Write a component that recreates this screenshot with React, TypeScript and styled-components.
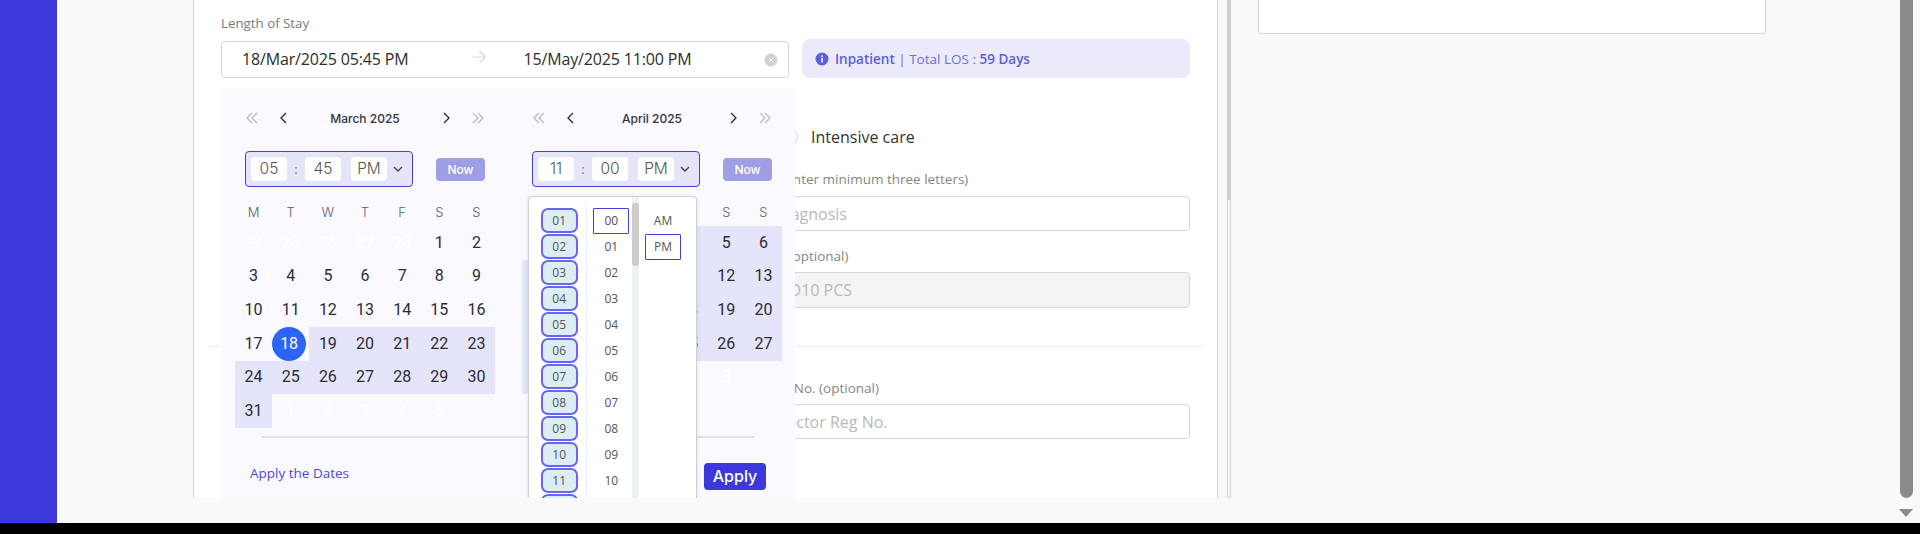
import { FC } from "react";
import styled, { createGlobalStyle } from "styled-components";

const GlobalStyle = createGlobalStyle`
  html, body {
    margin: 0;
    padding: 0;
    height: 534px;
    overflow: hidden;
    background: #000;
    font-family: "Open Sans", "Liberation Sans", sans-serif;
  }
  * { box-sizing: border-box; }
`;

interface DayCell {
  label: string;
  inRange?: boolean;
  muted?: boolean;
  selected?: boolean;
}

const buildDays = (
  before: number[],
  total: number,
  after: number[],
  isInRange: (day: number) => boolean,
  selected?: number,
): DayCell[] => [
  ...before.map((d) => ({ label: String(d), muted: true })),
  ...Array.from({ length: total }, (_, i) => ({
    label: String(i + 1),
    inRange: isInRange(i + 1),
    selected: selected === i + 1,
  })),
  ...after.map((d) => ({ label: String(d), muted: true })),
];

const marchDays = buildDays([24, 25, 26, 27, 28], 31, [1, 2, 3, 4, 5], (d) => d > 18, 18);
const aprilDays = buildDays([31], 30, [1, 2, 3], () => true);
const weekDays = ["M", "T", "W", "T", "F", "S", "S"];
const hours = ["01", "02", "03", "04", "05", "06", "07", "08", "09", "10", "11", "12"];
const minutes = ["00", "01", "02", "03", "04", "05", "06", "07", "08", "09", "10", "11"];

const InfoIcon = () => (
  <svg width='14' height='14' viewBox='0 0 14 14'>
    <circle cx='7' cy='7' r='6.5' fill='#5d5fdb' />
    <rect x='6.2' y='6' width='1.7' height='4.6' fill='#eaeafb' />
    <rect x='6.2' y='3.4' width='1.7' height='1.7' fill='#eaeafb' />
  </svg>
);

const ClearIcon = () => (
  <svg width='14' height='14' viewBox='0 0 14 14'>
    <circle cx='7' cy='7' r='6.5' fill='#d0d2da' />
    <path d='M5 5l4 4M9 5l-4 4' stroke='#fff' strokeWidth='1' />
  </svg>
);

const ArrowIcon = () => (
  <svg width='16' height='16' viewBox='0 0 16 16' fill='none' stroke='#d4d6dc' strokeWidth='1.2'>
    <path d='M1 8h13M8.5 2l5.8 6-5.8 6' />
  </svg>
);

const Chevron: FC<{ dir: "left" | "right"; double?: boolean }> = ({ dir, double }) => {
  if (double) {
    const paths =
      dir === "left" ? ["M7 2L2 7l5 5", "M12 2L7 7l5 5"] : ["M2 2l5 5-5 5", "M7 2l5 5-5 5"];
    return (
      <NavIcon viewBox='0 0 14 14' stroke='#b9bbc6'>
        <path d={paths[0]} />
        <path d={paths[1]} />
      </NavIcon>
    );
  }
  return (
    <NavIcon viewBox='0 0 14 14' stroke='#2b2b33'>
      <path d={dir === "left" ? "M9 2L4 7l5 5" : "M5 2l5 5-5 5"} />
    </NavIcon>
  );
};

const TimeField: FC<{ hour: string; minute: string }> = ({ hour, minute }) => (
  <TimeRow>
    <TimeBox>
      <TimeInput>{hour}</TimeInput>
      <TimeColon>:</TimeColon>
      <TimeInput>{minute}</TimeInput>
      <TimeInput $offset={10}>PM</TimeInput>
      <TimeCaret viewBox='0 0 10 6'>
        <path d='M1 1l4 4 4-4' />
      </TimeCaret>
    </TimeBox>
    <NowButton>Now</NowButton>
  </TimeRow>
);

const CalendarPane: FC<{ title: string; hour: string; minute: string; days: DayCell[] }> = ({
  title,
  hour,
  minute,
  days,
}) => (
  <Pane>
    <NavRow>
      <Chevron dir='left' double />
      <Chevron dir='left' />
      <MonthTitle>{title}</MonthTitle>
      <Chevron dir='right' />
      <Chevron dir='right' double />
    </NavRow>
    <TimeField hour={hour} minute={minute} />
    <WeekRow>
      {weekDays.map((w, i) => (
        <WeekDay key={i}>{w}</WeekDay>
      ))}
    </WeekRow>
    <DayGrid>
      {days.map((day, i) => (
        <DayBox key={i} $inRange={day.inRange}>
          <DayNumber $muted={day.muted} $selected={day.selected}>
            {day.label}
          </DayNumber>
        </DayBox>
      ))}
    </DayGrid>
  </Pane>
);

const App: FC = () => (
  <>
    <GlobalStyle />
    <Page>
      <Sidebar />
      <Card>
        <FieldLabel>Length of Stay</FieldLabel>
        <StayRow>
          <RangeInput>
            <RangeValue>18/Mar/2025 05:45 PM</RangeValue>
            <RangeArrow>
              <ArrowIcon />
            </RangeArrow>
            <RangeValue>15/May/2025 11:00 PM</RangeValue>
            <RangeClear>
              <ClearIcon />
            </RangeClear>
          </RangeInput>
          <Banner>
            <InfoIcon />
            <BannerText>
              <strong>Inpatient</strong> | Total LOS : <strong>59 Days</strong>
            </BannerText>
          </Banner>
        </StayRow>

        <RightColumn>
          <RadioRow>
            <RadioCircle />
            <span>Intensive care</span>
          </RadioRow>
          <ColumnLabel $top={22} $gap={8} $indent={-2}>
            Dx (Enter minimum three letters)
          </ColumnLabel>
          <TextBox>Diagnosis</TextBox>
          <ColumnLabel $top={16} $gap={7}>
            ICD (optional)
          </ColumnLabel>
          <TextBox $disabled>ICD10 PCS</TextBox>
        </RightColumn>
        <Separator />
        <RightColumn>
          <ColumnLabel $top={32} $gap={7} $indent={4}>
            Reg No. (optional)
          </ColumnLabel>
          <TextBox>Doctor Reg No.</TextBox>
        </RightColumn>

        <DatePopup>
          <PaneRow>
            <CalendarPane title='March 2025' hour='05' minute='45' days={marchDays} />
            <CalendarPane title='April 2025' hour='11' minute='00' days={aprilDays} />
          </PaneRow>
          <PopupDivider />
          <PopupFooter>
            <ApplyLink>Apply the Dates</ApplyLink>
            <ApplyButton>Apply</ApplyButton>
          </PopupFooter>
          <TimeDropdown>
            <HourColumn>
              {hours.map((h) => (
                <HourOption key={h}>{h}</HourOption>
              ))}
            </HourColumn>
            <MinuteColumn>
              {minutes.map((m, i) => (
                <PlainOption key={m} $active={i === 0}>
                  {m}
                </PlainOption>
              ))}
            </MinuteColumn>
            <ScrollTrack>
              <ScrollThumb />
            </ScrollTrack>
            <PeriodColumn>
              <PlainOption>AM</PlainOption>
              <PlainOption $active>PM</PlainOption>
            </PeriodColumn>
          </TimeDropdown>
        </DatePopup>
      </Card>
      <InnerScrollbar>
        <InnerThumb />
      </InnerScrollbar>
      <SidePanel>
        <SideBox />
      </SidePanel>
      <PageScrollbar>
        <PageThumb />
        <ScrollArrow />
      </PageScrollbar>
    </Page>
  </>
);

const Page = styled.div`
  display: flex;
  height: 523px;
  background: #f8f9fb;
  align-items: flex-start;
`;

const Sidebar = styled.div`
  width: 57px;
  height: 100%;
  background: #3c38dc;
  flex-shrink: 0;
`;

const Card = styled.div`
  position: relative;
  width: 1025px;
  height: 498px;
  margin-left: 136px;
  padding: 14px 27px 0 27px;
  background: #fff;
  border-left: 1px solid #d2d4d8;
  border-right: 1px solid #d2d4d8;
  overflow: hidden;
  flex-shrink: 0;
`;

const FieldLabel = styled.div`
  font-size: 13.3px;
  line-height: 19px;
  color: #7a7a7a;
`;

const StayRow = styled.div`
  display: flex;
  align-items: flex-start;
  gap: 13px;
  margin-top: 6px;
`;

const RangeInput = styled.div`
  display: flex;
  align-items: center;
  width: 568px;
  height: 37px;
  margin-top: 2px;
  padding-left: 20px;
  padding-bottom: 1px;
  border: 1px solid #d4d6da;
  border-radius: 4px;
`;

const RangeValue = styled.span`
  width: 170px;
  font-size: 16px;
  letter-spacing: -0.15px;
  color: #2c2c2c;
  white-space: nowrap;
`;

const RangeArrow = styled.span`
  display: flex;
  justify-content: center;
  width: 111.5px;
  margin-top: -5px;
  padding-left: 23px;
`;

const RangeClear = styled.span`
  display: flex;
  margin-left: 70px;
  margin-top: 2px;
`;

const Banner = styled.div`
  display: flex;
  align-items: center;
  gap: 6px;
  width: 388px;
  height: 39px;
  padding-left: 13px;
  background: #eaeafb;
  border-radius: 8px;
`;

const BannerText = styled.span`
  font-size: 13.5px;
  color: #6d6fdd;
  white-space: nowrap;
  strong {
    font-weight: 600;
    color: #5d5fd6;
  }
`;

const RightColumn = styled.div`
  display: flex;
  flex-direction: column;
  margin-left: 542px;
`;

const RadioRow = styled.div`
  display: flex;
  align-items: center;
  gap: 13px;
  margin-top: 48px;
  margin-left: 17px;
  font-size: 16px;
  line-height: 22px;
  color: #333;
`;

const RadioCircle = styled.span`
  width: 18px;
  height: 18px;
  border: 1px solid #cfd1d6;
  border-radius: 50%;
`;

const ColumnLabel = styled.div<{ $top: number; $gap: number; $indent?: number }>`
  margin-top: ${(p) => p.$top}px;
  margin-bottom: ${(p) => p.$gap}px;
  margin-left: ${(p) => p.$indent ?? 0}px;
  font-size: 13.5px;
  line-height: 18px;
  color: #858585;
  white-space: nowrap;
`;

const TextBox = styled.div<{ $disabled?: boolean }>`
  height: ${(p) => (p.$disabled ? 36 : 35)}px;
  padding-left: 11px;
  font-size: 16px;
  line-height: 34px;
  color: #b9b9b9;
  background: ${(p) => (p.$disabled ? "#f4f4f4" : "#fff")};
  border: 1px solid #d4d6da;
  border-radius: 4px;
`;

const Separator = styled.div`
  height: 1px;
  margin: 38px -13px 0 -12px;
  background: #eceef0;
`;

const DatePopup = styled.div`
  position: absolute;
  left: 27px;
  top: 88px;
  width: 574px;
  height: 460px;
  padding: 0 0 0 14px;
  background: #f9f9ff;
`;

const PaneRow = styled.div`
  display: flex;
  gap: 27px;
`;

const Pane = styled.div`
  width: 260px;
`;

const NavRow = styled.div`
  display: flex;
  align-items: center;
  height: 14px;
  margin: 23px 10px 0;
  gap: 18px;
`;

const NavIcon = styled.svg`
  width: 14px;
  height: 14px;
  fill: none;
  stroke-width: 1.3;
  flex-shrink: 0;
`;

const MonthTitle = styled.span`
  flex: 1;
  font-family: Inter, "Liberation Sans", sans-serif;
  font-size: 12px;
  font-weight: 500;
  color: #33333d;
  text-align: center;
`;

const TimeRow = styled.div`
  display: flex;
  align-items: center;
  gap: 23px;
  height: 36px;
  margin: 26px 10px 0;
`;

const TimeBox = styled.div`
  display: flex;
  align-items: center;
  width: 168px;
  height: 36px;
  padding-left: 5px;
  background: #e4e5f9;
  border: 1px solid #4140dc;
  border-radius: 4px;
`;

const TimeInput = styled.span<{ $offset?: number }>`
  width: 36px;
  height: 24px;
  margin-left: ${(p) => p.$offset ?? 0}px;
  font-family: Inter, "Liberation Sans", sans-serif;
  font-size: 15.5px;
  font-weight: 300;
  line-height: 23px;
  color: #555;
  text-align: center;
  background: #fff;
  border-radius: 4px;
`;

const TimeColon = styled.span`
  width: 18px;
  font-size: 13px;
  color: #777;
  text-align: center;
`;

const TimeCaret = styled.svg`
  width: 10px;
  height: 6px;
  margin-left: 6px;
  fill: none;
  stroke: #444;
  stroke-width: 1.4;
`;

const NowButton = styled.span`
  width: 49px;
  height: 23px;
  font-family: Inter, "Liberation Sans", sans-serif;
  font-size: 12px;
  font-weight: 500;
  line-height: 23px;
  color: #fff;
  text-align: center;
  background: #9f9fe6;
  border-radius: 4px;
`;

const WeekRow = styled.div`
  display: grid;
  grid-template-columns: repeat(7, 1fr);
  height: 20px;
  margin-top: 15px;
`;

const WeekDay = styled.span`
  font-family: Inter, "Liberation Sans", sans-serif;
  font-size: 13px;
  font-weight: 300;
  line-height: 20px;
  color: #5f5f5f;
  text-align: center;
`;

const DayGrid = styled.div`
  display: grid;
  grid-template-columns: repeat(7, 1fr);
  grid-auto-rows: 33.67px;
  margin-top: 4px;
`;

const DayBox = styled.div<{ $inRange?: boolean }>`
  display: flex;
  align-items: center;
  justify-content: center;
  background: ${(p) => (p.$inRange ? "#e4e5fb" : "transparent")};
`;

const DayNumber = styled.span<{ $muted?: boolean; $selected?: boolean }>`
  width: 34px;
  height: 34px;
  margin-right: ${(p) => (p.$selected ? 3.2 : 0)}px;
  font-family: Roboto, "Liberation Sans", sans-serif;
  font-size: 16px;
  line-height: 34px;
  text-align: center;
  border-radius: 50%;
  color: ${(p) => (p.$muted ? "#ffffff" : p.$selected ? "#fff" : "#2c2c33")};
  background: ${(p) => (p.$selected ? "#2c65f6" : "transparent")};
`;

const PopupDivider = styled.div`
  height: 2px;
  margin: 8px 26px 0;
  width: 494px;
  background: #e2e2e8;
`;

const PopupFooter = styled.div`
  display: flex;
  align-items: flex-start;
  justify-content: space-between;
  margin: 25px 29px 0 15px;
`;

const ApplyLink = styled.span`
  font-size: 13.5px;
  line-height: 20px;
  color: #4a48e0;
`;

const ApplyButton = styled.span`
  width: 62px;
  height: 27px;
  font-family: Inter, "Liberation Sans", sans-serif;
  font-size: 16px;
  font-weight: 500;
  line-height: 27px;
  color: #fff;
  text-align: center;
  background: #3c38dc;
  border-radius: 4px;
`;

const TimeDropdown = styled.div`
  position: absolute;
  left: 307px;
  top: 108px;
  display: flex;
  width: 169px;
  height: 360px;
  background: #fff;
  border: 1px solid #cfd1d6;
  border-radius: 4px;
  box-shadow: 0 1px 4px rgba(0, 0, 0, 0.12);
`;

const HourColumn = styled.div`
  display: flex;
  flex-direction: column;
  align-items: center;
  gap: 1px;
  width: 59px;
  height: 340px;
  margin-top: 6px;
  padding: 5px 0 0 3px;
  border-right: 1px solid #eeeff1;
`;

const HourOption = styled.span`
  flex-shrink: 0;
  width: 37px;
  height: 25px;
  font-size: 12px;
  line-height: 21px;
  color: #555;
  text-align: center;
  background: #dcedf3;
  border: 2px solid #6666ff;
  border-radius: 7px;
`;

const MinuteColumn = styled.div`
  display: flex;
  flex-direction: column;
  align-items: center;
  width: 45px;
  padding-top: 11px;
  padding-left: 3px;
`;

const PlainOption = styled.span<{ $active?: boolean }>`
  flex-shrink: 0;
  width: 36px;
  height: 26px;
  font-size: 12px;
  line-height: 24px;
  color: #555;
  text-align: center;
  border: 1px solid ${(p) => (p.$active ? "#4140dc" : "transparent")};
  border-radius: 1px;
`;

const ScrollTrack = styled.div`
  width: 7px;
  padding-top: 6px;
  background: #eef2f5;
`;

const ScrollThumb = styled.div`
  height: 63px;
  background: #cccccc;
  border-radius: 3px;
`;

const PeriodColumn = styled.div`
  display: flex;
  flex-direction: column;
  align-items: center;
  flex: 1;
  padding: 11px 15px 0 6px;
`;

const InnerScrollbar = styled.div`
  width: 4px;
  height: 498px;
  margin-left: 9px;
  border: 1px solid #d2d4d8;
  border-top: 0;
  flex-shrink: 0;
`;

const InnerThumb = styled.div`
  height: 200px;
  margin: 0 -1px;
  background: #cfd0d3;
`;

const SidePanel = styled.div`
  flex: 1;
  padding-left: 27px;
  padding-right: 131px;
`;

const SideBox = styled.div`
  height: 34px;
  background: #fff;
  border: 1px solid #d2d4d8;
  border-top: 0;
  border-radius: 0 0 4px 4px;
`;

const PageScrollbar = styled.div`
  position: relative;
  display: flex;
  flex-direction: column;
  align-items: center;
  width: 23px;
  height: 100%;
  flex-shrink: 0;
`;

const PageThumb = styled.div`
  width: 13px;
  height: 498px;
  margin-left: -5px;
  background: #8a8a8a;
  border-radius: 0 0 7px 7px;
`;

const ScrollArrow = styled.div`
  width: 0;
  height: 0;
  margin-top: 11px;
  margin-left: -5px;
  border-left: 7.5px solid transparent;
  border-right: 7.5px solid transparent;
  border-top: 8px solid #8a8a8a;
`;

export default App;
